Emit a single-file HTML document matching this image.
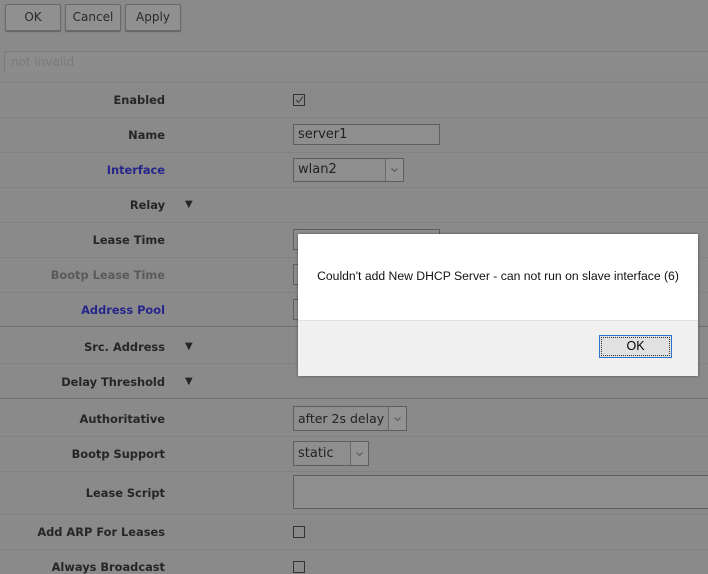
<!DOCTYPE html><html><head><style>
body{margin:0;width:708px;height:566px;overflow:hidden;background:#8a8a8a;font-family:"DejaVu Sans",Verdana,sans-serif;position:relative}
.a{position:absolute}
.btn{top:4px;height:25px;border:1px solid #6a6a6a;border-radius:2px;background:#909090;box-shadow:0 1px 1px rgba(0,0,0,.3);font-size:12px;color:#2a2a2a;text-align:center;line-height:25px}
.lbl{right:543px;font-size:11.4px;font-weight:bold;color:#262626;white-space:nowrap}
.blue{color:#26268a}
.grey{color:#5a5a5a}
.sep{left:0;width:708px;height:1px;background:#828282}
.sep2{left:0;width:708px;height:1px;background:#707070}
.in{left:293px;height:21px;border:1px solid #5e5e5e;background:#8e8e8e;box-sizing:border-box;font-size:13px;color:#222;line-height:19px;padding-left:4px}
.dd{position:absolute;right:0;top:0;width:17px;height:100%;border-left:1px solid #6a6a6a;background:#939393}
.dd svg{position:absolute;left:5px;top:50%;margin-top:-2px}
.cb{left:293px;width:12px;height:12px;border:1px solid #333;box-sizing:border-box}
.tri{font-size:10px;color:#262626}
</style></head><body>
<div class="a btn" style="left:5px;width:54px">OK</div>
<div class="a btn" style="left:65px;width:54px">Cancel</div>
<div class="a btn" style="left:125px;width:54px">Apply</div>
<div class="a" style="left:4px;top:51px;width:704px;height:21px;border-top:1px solid #7a7a7a;border-left:1px solid #7a7a7a;background:#8c8c8c;font-size:12px;color:#7a7a7a;line-height:21px;padding-left:6px">not invalid</div>
<div class="a sep" style="top:82px"></div>
<div class="a lbl" style="top:93px">Enabled</div>
<div class="a cb" style="top:94px"><svg width="10" height="10" style="position:absolute;left:0;top:0"><path d="M2 5 L4.5 7.5 L9 1.5" stroke="#333" fill="none" stroke-width="1"/></svg></div>
<div class="a sep" style="top:117px"></div>
<div class="a lbl" style="top:128px">Name</div>
<div class="a in" style="top:124px;width:147px">server1</div>
<div class="a sep" style="top:152px"></div>
<div class="a lbl blue" style="top:163px">Interface</div>
<div class="a in" style="top:158px;width:111px;height:24px;line-height:22px">wlan2<div class="dd"><svg width="7" height="4"><path d="M0.5 0.5 L3.5 3.5 L6.5 0.5" stroke="#555" fill="none"/></svg></div></div>
<div class="a sep" style="top:187px"></div>
<div class="a lbl" style="top:198px">Relay</div><div class="a tri" style="left:185px;top:199px">▼</div>
<div class="a sep" style="top:222px"></div>
<div class="a lbl" style="top:233px">Lease Time</div>
<div class="a in" style="top:229px;width:147px"></div>
<div class="a sep" style="top:257px"></div>
<div class="a lbl grey" style="top:268px">Bootp Lease Time</div>
<div class="a in" style="top:264px;width:147px"></div>
<div class="a sep" style="top:292px"></div>
<div class="a lbl blue" style="top:303px">Address Pool</div>
<div class="a in" style="top:299px;width:147px"></div>
<div class="a sep2" style="top:326px"></div>
<div class="a lbl" style="top:340px">Src. Address</div><div class="a tri" style="left:185px;top:341px">▼</div>
<div class="a sep" style="top:363px"></div>
<div class="a lbl" style="top:375px">Delay Threshold</div><div class="a tri" style="left:185px;top:376px">▼</div>
<div class="a sep2" style="top:398px"></div>
<div class="a lbl" style="top:412px">Authoritative</div>
<div class="a in" style="top:406px;width:114px;height:25px;line-height:23px;font-size:12.5px">after 2s delay<div class="dd"><svg width="7" height="4"><path d="M0.5 0.5 L3.5 3.5 L6.5 0.5" stroke="#555" fill="none"/></svg></div></div>
<div class="a sep" style="top:436px"></div>
<div class="a lbl" style="top:447px">Bootp Support</div>
<div class="a in" style="top:441px;width:76px;height:25px;line-height:23px">static<div class="dd"><svg width="7" height="4"><path d="M0.5 0.5 L3.5 3.5 L6.5 0.5" stroke="#555" fill="none"/></svg></div></div>
<div class="a sep" style="top:471px"></div>
<div class="a lbl" style="top:486px">Lease Script</div>
<div class="a in" style="top:475px;width:420px;height:34px"></div>
<div class="a sep" style="top:514px"></div>
<div class="a lbl" style="top:525px">Add ARP For Leases</div>
<div class="a cb" style="top:526px"></div>
<div class="a sep" style="top:549px"></div>
<div class="a lbl" style="top:560px">Always Broadcast</div>
<div class="a cb" style="top:561px"></div>
<div class="a" style="left:298px;top:234px;width:400px;height:142px;background:#f0f0f0;box-shadow:0 0 3px rgba(0,0,0,.4);font-family:'Liberation Sans',Arial,sans-serif">
<div style="height:86px;background:#fff;border-bottom:1px solid #e2e2e2;font-size:12.2px;color:#111;text-align:center;line-height:84px">Couldn't add New DHCP Server - can not run on slave interface (6)</div>
<div class="a" style="left:301px;top:101px;width:73px;height:23px;border:1px solid #2a73c8;background:#e1e1e1;font-size:12.5px;text-align:center;line-height:21px;box-sizing:border-box;outline:1px dotted #333;outline-offset:-3px">OK</div>
</div>
</body></html>
